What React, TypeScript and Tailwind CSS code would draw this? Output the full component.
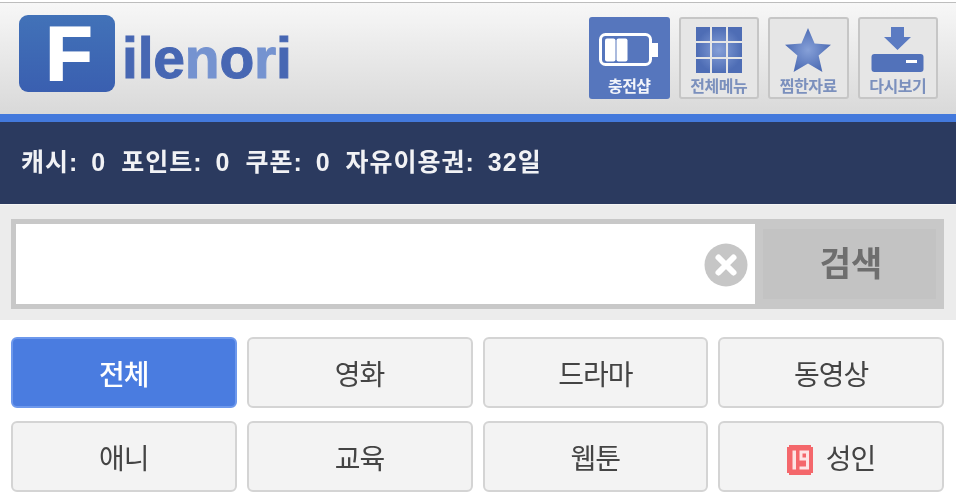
import { ReactNode } from "react";

const fontStack = { fontFamily: '"Liberation Sans", "Noto Sans CJK KR", sans-serif' };

type NavProps = {
    label: string;
    active?: boolean;
    children: ReactNode;
};

const NavButton = ({ label, active, children }: NavProps) => (
    <div
        className={`w-[80.5px] h-[82px] flex flex-col items-center rounded-[3px] ${
            active ? "bg-[#5676bd]" : "border-[2px] border-[#c6c6c6] bg-[#e6e6e6]"
        }`}
    >
        <div className={`h-[58px] w-full flex items-center justify-center ${active ? "mt-[4px]" : "mt-[2px]"}`}>{children}</div>
        <span className={`text-[16px] leading-[16px] font-bold tracking-[-0.5px] ${active ? "text-[#f2f4fa]" : "text-[#7b90bd]"}`}>
            {label}
        </span>
    </div>
);

const BatteryIcon = () => (
    <svg width="60" height="34" viewBox="0 0 60 34">
        <rect x="1.5" y="1.5" width="50" height="30" rx="5" fill="none" stroke="#fff" strokeWidth="3" />
        <rect x="53" y="10" width="6" height="14" fill="#fff" />
        <rect x="6" y="5.5" width="10.5" height="23" rx="2" fill="#fff" />
        <rect x="17.5" y="5.5" width="11" height="23" rx="2" fill="#fff" />
    </svg>
);

const GridIcon = () => (
    <svg width="46" height="46" viewBox="0 0 46 46">
        <defs>
            <radialGradient id="gridFill">
                <stop offset="0" stopColor="#86a0d8" />
                <stop offset="1" stopColor="#4e6db5" />
            </radialGradient>
        </defs>
        <path
            d="M0 0h14v14H0zM16 0h14v14H16zM32 0h14v14H32zM0 16h14v14H0zM16 16h14v14H16zM32 16h14v14H32zM0 32h14v14H0zM16 32h14v14H16zM32 32h14v14H32z"
            fill="url(#gridFill)"
        />
    </svg>
);

const StarIcon = () => (
    <svg width="46" height="44" viewBox="0 0 46 44">
        <defs>
            <radialGradient id="starFill">
                <stop offset="0" stopColor="#86a0d8" />
                <stop offset="1" stopColor="#4e6db5" />
            </radialGradient>
        </defs>
        <path d="M23 0l6.6 15.4L46 16.8 33.6 27.6 37.4 44 23 35.4 8.6 44l3.8-16.4L0 16.8l16.4-1.4z" fill="url(#starFill)" />
    </svg>
);

const DownloadIcon = () => (
    <svg width="54" height="46" viewBox="0 0 54 46">
        <path d="M20 0h13v10h7L26.5 23 13 10h7z" fill="#5b7bc2" />
        <rect x="0.5" y="27" width="52" height="18" rx="3" fill="#5272ba" />
        <rect x="35" y="33" width="11" height="3" fill="#fff" />
    </svg>
);

const ClearIcon = () => (
    <svg width="44" height="44" viewBox="0 0 44 44">
        <circle cx="22" cy="22" r="21.5" fill="#c6c6c6" />
        <path d="M14.5 14.5l15 15M29.5 14.5l-15 15" stroke="#fff" strokeWidth="6" strokeLinecap="round" />
    </svg>
);

const AdultBadge = () => (
    <svg width="26" height="30" viewBox="0 0 26 30" className="mr-[13px]">
        <path d="M2 0h22v2h2v26h-2v2H2v-2H0V2h2z" fill="#f4676b" />
        <path d="M5.500 5.500h3.500v19H5.500z" fill="#fde4e4" />
        <path d="M12.500 5.500H22v19h-9.500v-3h6.500v-6h-6.500zM15.500 8.500v4h3.500v-4z" fill="#fde4e4" fillRule="evenodd" />
    </svg>
);

const categories = ["전체", "영화", "드라마", "동영상", "애니", "교육", "웹툰", "성인"];
const balances = ["캐시: 0", "포인트: 0", "쿠폰: 0", "자유이용권: 32일"];

export default function App() {
    return (
        <div className="w-[956px] h-[503px] overflow-hidden bg-white blur-[0.5px]" style={fontStack}>
            <div className="h-[2px] bg-white" />
            <header className="h-[112px] border-t border-[#bdbdbd] bg-gradient-to-b from-[#f7f7f7] to-[#d9d9d9] flex items-start justify-between pl-[19px] pr-[18px]">
                <div className="flex items-start mt-[12px]">
                    <div className="w-[96px] h-[77px] rounded-[9px] bg-gradient-to-b from-[#4272b8] to-[#3a5fb0] flex items-center justify-center">
                        <span className="text-white font-bold text-[76px] leading-none ml-[4px] [-webkit-text-stroke:2px_white]">F</span>
                    </div>
                    <div className="text-[57px] leading-none font-bold mt-[15px] ml-[7px] tracking-[-0.2px] text-[#4767b3] [-webkit-text-stroke:1px_#4767b3]">
                        ile
                        <span className="text-[#7593d0] [-webkit-text-stroke:1px_#7593d0]">n</span>o
                        <span className="text-[#7593d0] [-webkit-text-stroke:1px_#7593d0]">r</span>i
                    </div>
                </div>
                <div className="flex gap-[9px] mt-[14px]">
                    <NavButton label="충전샵" active>
                        <BatteryIcon />
                    </NavButton>
                    <NavButton label="전체메뉴">
                        <GridIcon />
                    </NavButton>
                    <NavButton label="찜한자료">
                        <StarIcon />
                    </NavButton>
                    <NavButton label="다시보기">
                        <DownloadIcon />
                    </NavButton>
                </div>
            </header>
            <div className="h-[8px] bg-[#4379dc]" />
            <div className="h-[82px] bg-[#2b3a5f] flex items-center gap-[15px] pl-[21px] text-[25px] font-bold text-[#f1f2f5] tracking-[1px] [word-spacing:5px]">
                {balances.map((item) => (
                    <span key={item}>{item}</span>
                ))}
            </div>
            <div className="h-[116px] bg-[#ececec] border-t border-[#f5f5f5] pt-[14px] px-[11px]">
                <div className="h-[90px] w-[933px] bg-[#c8c8c8] flex p-[5px] pr-0">
                    <div className="w-[739px] h-[80px] bg-white flex items-center justify-end pr-[7px]">
                        <div className="mt-[2px]">
                            <ClearIcon />
                        </div>
                    </div>
                    <div className="flex-1 flex items-center justify-center px-[8px]">
                        <div className="w-full h-[70px] bg-[#c3c3c3] flex items-center justify-center">
                            <span className="text-[34px] font-bold text-[#6e6e6e] ml-[3px]">검색</span>
                        </div>
                    </div>
                </div>
            </div>
            <div className="grid grid-cols-4 gap-x-[10px] gap-y-[13px] pt-[17px] pl-[11px] pr-[12px]">
                {categories.map((name, index) => (
                    <div
                        key={name}
                        className={`h-[71px] rounded-[6px] border-[2px] flex items-center justify-center text-[28px] tracking-[-1px] pt-[6px] ${
                            index === 0
                                ? "bg-[#4a7ce0] border-[#6d98ec] text-white font-medium"
                                : "bg-[#f3f3f3] border-[#d4d4d4] text-[#444444]"
                        }`}
                    >
                        {name === "성인" ? <AdultBadge /> : null}
                        {name}
                    </div>
                ))}
            </div>
        </div>
    );
}
